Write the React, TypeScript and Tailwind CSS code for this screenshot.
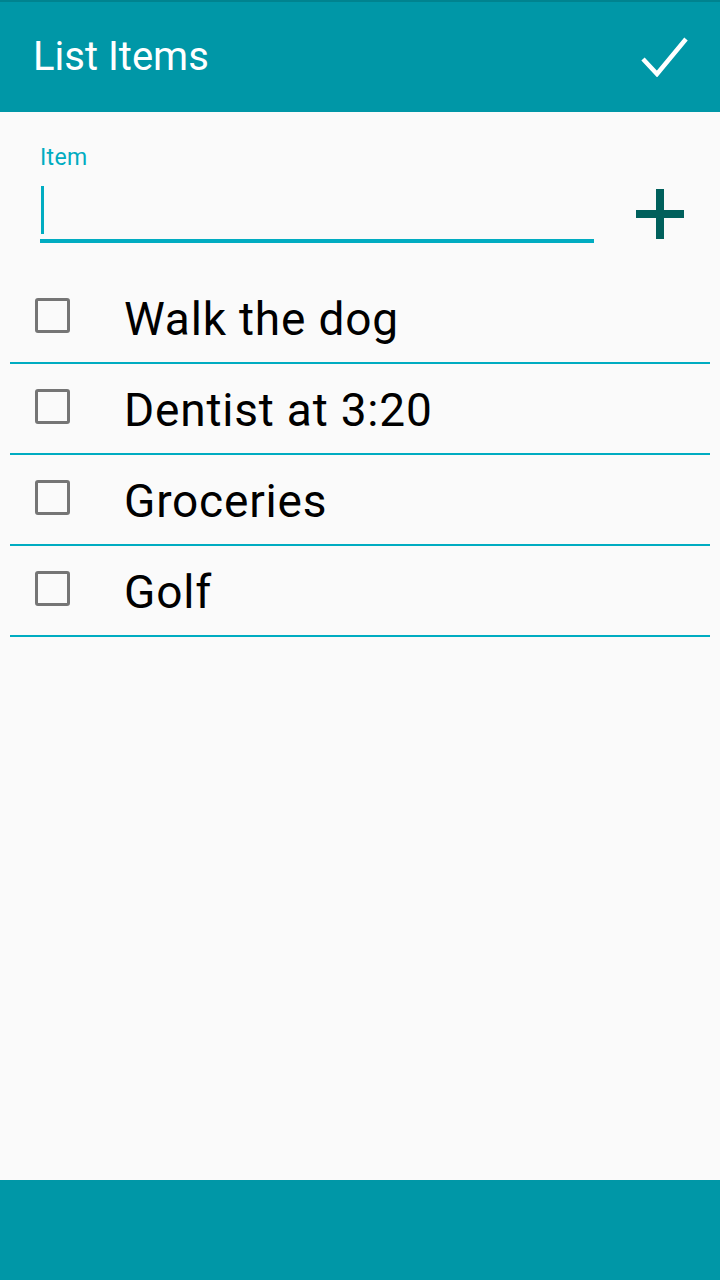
import React from "react";

const items = ["Walk the dog", "Dentist at 3:20", "Groceries", "Golf"];

export default function App() {
  return (
    <div
      className="w-[720px] h-[1280px] flex flex-col bg-[#fafafa]"
      style={{ fontFamily: "Roboto, 'Noto Sans', sans-serif" }}
    >
      <header className="h-[112px] shrink-0 bg-[#0097a7] border-t-2 border-[#00838f] flex items-center justify-between pl-[33px] pr-[30px]">
        <h1 className="text-white text-[40px] leading-none font-normal">List Items</h1>
        <svg width="50" height="40" viewBox="0 0 50 40">
          <path d="M3 22 L17 37 L46 2" fill="none" stroke="white" strokeWidth="4.5" />
        </svg>
      </header>
      <main className="flex-1 flex flex-col">
        <div className="flex items-end pl-[40px] pr-[36px] pt-[34px]">
          <div className="w-[554px] flex flex-col">
            <label className="text-[#00acc1] text-[23px] leading-none tracking-[0.3px]">Item</label>
            <div className="w-[3px] h-[48px] bg-[#00acc1] mt-[17px] ml-[1px]" />
            <div className="h-[4px] bg-[#00acc1] mt-[5px]" />
          </div>
          <div className="flex-1 flex justify-end mb-[4px]">
            <svg width="48" height="50" viewBox="0 0 48 50">
              <rect x="20" y="0" width="8" height="50" fill="#00605c" />
              <rect x="0" y="21" width="48" height="8" fill="#00605c" />
            </svg>
          </div>
        </div>
        <ul className="mt-[30px] px-[10px]">
          {items.map((t) => (
            <li key={t} className="h-[91px] border-b-2 border-[#00acc1] flex items-center">
              <div className="w-[35px] h-[35px] ml-[25px] border-[3px] border-[#757575] rounded-[3px] mt-[-5px]" />
              <span className="ml-[54px] text-[46px] text-black leading-none mt-[2px] tracking-[0.8px]">{t}</span>
            </li>
          ))}
        </ul>
      </main>
      <footer className="h-[100px] shrink-0 bg-[#0097a7]" />
    </div>
  );
}
